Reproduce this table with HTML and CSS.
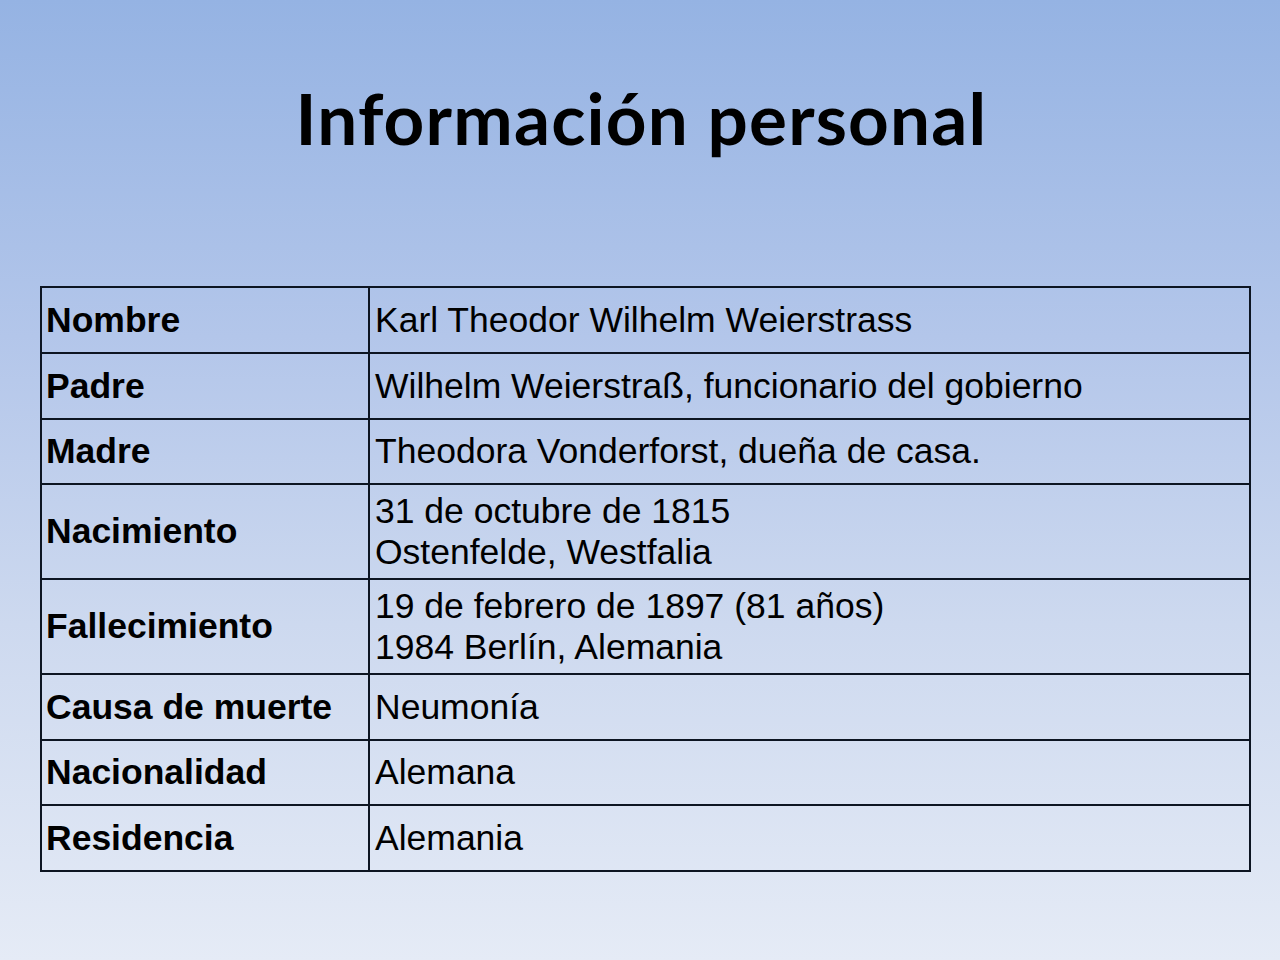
FILE: index.html
```html
<!DOCTYPE html>
<html lang="es">
<head>
<meta charset="utf-8">
<title>Información personal</title>
<link rel="stylesheet" href="styles.css">
</head>
<body>
<main class="slide">
  <h1 class="title">Información personal</h1>
  <table class="info">
    <tr class="r66"><th>Nombre</th><td>Karl Theodor Wilhelm Weierstrass</td></tr>
    <tr class="r66"><th>Padre</th><td>Wilhelm Weierstraß, funcionario del gobierno</td></tr>
    <tr class="r65"><th>Madre</th><td>Theodora Vonderforst, dueña de casa.</td></tr>
    <tr class="r95"><th>Nacimiento</th><td>31 de octubre de 1815<br>Ostenfelde, Westfalia</td></tr>
    <tr class="r95"><th>Fallecimiento</th><td>19 de febrero de 1897 (81 años)<br>1984 Berlín, Alemania</td></tr>
    <tr class="r66"><th>Causa de muerte</th><td>Neumonía</td></tr>
    <tr class="r65"><th>Nacionalidad</th><td>Alemana</td></tr>
    <tr class="r66"><th>Residencia</th><td>Alemania</td></tr>
  </table>
</main>
</body>
</html>
```

FILE: styles.css
```css
html, body {
  margin: 0;
  padding: 0;
}
body {
  width: 1280px;
  height: 960px;
  background: linear-gradient(to bottom, #95b3e3 0%, #b3c6ea 35%, #cdd9ef 65%, #e5ebf6 100%);
  overflow: hidden;
}
.slide {
  display: flex;
  flex-direction: column;
  align-items: stretch;
  padding: 0 29px 0 40px;
}
.title {
  margin: 73px 0 0 0;
  text-align: center;
  font-family: "Lato", "Open Sans", sans-serif;
  font-weight: 700;
  font-size: 71px;
  line-height: 90px;
  color: #000;
  letter-spacing: 1.2px;
  transform: translateX(-4px);
}
.info {
  margin-top: 123px;
  width: 1211px;
  border-collapse: collapse;
  font-family: "Liberation Sans", Arial, sans-serif;
  font-size: 35.5px;
  color: #000;
}
.info th, .info td {
  border: 2px solid #0d1522;
  vertical-align: middle;
  text-align: left;
  padding: 0 5px;
  line-height: 41px;
}
.info th {
  width: 317px;
  padding-left: 4px;
  font-weight: 700;
}
.info td {
  font-weight: 400;
}
.r65 { height: 65px; }
.r66 { height: 66px; }
.r95 { height: 95px; }
```
